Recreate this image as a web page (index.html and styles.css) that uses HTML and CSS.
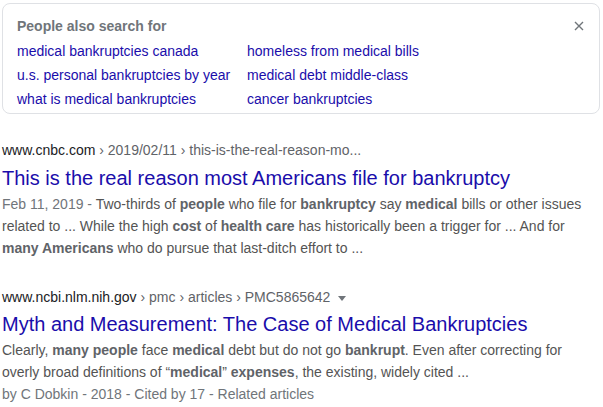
FILE: index.html
```html
<!DOCTYPE html>
<html>
<head>
<meta charset="utf-8">
<link rel="stylesheet" href="styles.css">
</head>
<body>
<div class="page">
  <div class="pasf">
    <div class="pasf-head">
      <span class="pasf-title">People also search for</span>
      <svg class="close" width="10" height="10" viewBox="0 0 10 10"><path d="M1 1L9 9M9 1L1 9" stroke="#70757a" stroke-width="1.4" fill="none"/></svg>
    </div>
    <div class="pasf-grid">
      <a class="pasf-link">medical bankruptcies canada</a>
      <a class="pasf-link">homeless from medical bills</a>
      <a class="pasf-link">u.s. personal bankruptcies by year</a>
      <a class="pasf-link">medical debt middle-class</a>
      <a class="pasf-link">what is medical bankruptcies</a>
      <a class="pasf-link">cancer bankruptcies</a>
    </div>
  </div>

  <div class="result r1">
    <div class="cite"><span class="domain">www.cnbc.com</span> › 2019/02/11 › this-is-the-real-reason-mo...</div>
    <a class="title">This is the real reason most Americans file for bankruptcy</a>
    <div class="snippet"><span class="date">Feb 11, 2019 - </span>Two-thirds of <b>people</b> who file for <b>bankruptcy</b> say <b>medical</b> bills or other issues related to ... While the high <b>cost</b> of <b>health care</b> has historically been a trigger for ... And for <b>many Americans</b> who do pursue that last-ditch effort to ...</div>
  </div>

  <div class="result r2">
    <div class="cite"><span class="domain">www.ncbi.nlm.nih.gov</span> › pmc › articles › PMC5865642 <span class="caret"></span></div>
    <a class="title">Myth and Measurement: The Case of Medical Bankruptcies</a>
    <div class="snippet">Clearly, <b>many people</b> face <b>medical</b> debt but do not go <b>bankrupt</b>. Even after correcting for overly broad definitions of “<b>medical</b>” <b>expenses</b>, the existing, widely cited ...</div>
    <div class="meta">by C Dobkin - 2018 - Cited by 17 - Related articles</div>
  </div>
</div>
</body>
</html>
```

FILE: styles.css
```css
html, body {
  margin: 0;
  padding: 0;
  background: #ffffff;
}
body {
  font-family: "Liberation Sans", Arial, sans-serif;
  font-size: 14px;
  color: #4d5156;
}
.page {
  padding: 3px 0 0 2px;
  width: 598px;
}
.pasf {
  box-sizing: border-box;
  height: 111px;
  border: 1px solid #dfe1e5;
  border-radius: 8px;
  padding: 12px 14px 0 14px;
}
.pasf-head {
  display: flex;
  justify-content: space-between;
  align-items: center;
  height: 20px;
  line-height: 20px;
}
.pasf-title {
  font-weight: bold;
  color: #70757a;
}
.close {
  margin-right: 1px;
}
.pasf-grid {
  display: grid;
  grid-template-columns: 230px 1fr;
  margin-top: 3px;
}
.pasf-link {
  color: #1a0dab;
  line-height: 24px;
  white-space: nowrap;
}
.result {
  display: flex;
  flex-direction: column;
}
.r1 {
  margin-top: 26px;
}
.r2 {
  margin-top: 28px;
}
.cite {
  line-height: 20px;
  color: #5f6368;
  white-space: nowrap;
}
.domain {
  color: #202124;
}
.caret {
  display: inline-block;
  width: 0;
  height: 0;
  border-left: 4px solid transparent;
  border-right: 4px solid transparent;
  border-top: 5px solid #70757a;
  margin-left: 4px;
  vertical-align: middle;
}
.title {
  color: #1a0dab;
  font-size: 20px;
  line-height: 28px;
  margin-top: 4px;
  white-space: nowrap;
}
.r2 .title {
  margin-top: 3px;
}
.snippet {
  line-height: 22px;
  margin-top: 1px;
  color: #545454;
}
.snippet b {
  color: #5f6368;
}
.date {
  color: #70757a;
}
.meta {
  line-height: 22px;
  color: #70757a;
}
```
